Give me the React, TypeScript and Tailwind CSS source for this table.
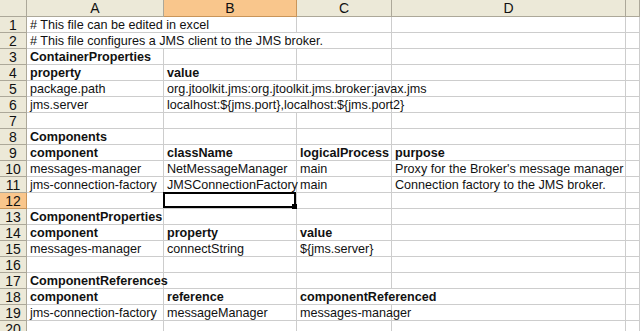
import React from "react";

type Cell = { t?: string; b?: boolean; span?: number };

// rows of the sheet, A..E; span lets long text run over the empty cells to the right
const rows: Cell[][] = [
  [{ t: "# This file can be edited in excel", span: 2 }, {}, {}, {}],
  [{ t: "# This file configures a JMS client to the JMS broker.", span: 3 }, {}, {}],
  [{ t: "ContainerProperties", b: true }, {}, {}, {}, {}],
  [{ t: "property", b: true }, { t: "value", b: true }, {}, {}, {}],
  [{ t: "package.path" }, { t: "org.jtoolkit.jms:org.jtoolkit.jms.broker:javax.jms", span: 2 }, {}, {}],
  [{ t: "jms.server" }, { t: "localhost:${jms.port},localhost:${jms.port2}", span: 2 }, {}, {}],
  [{}, {}, {}, {}, {}],
  [{ t: "Components", b: true }, {}, {}, {}, {}],
  [{ t: "component", b: true }, { t: "className", b: true }, { t: "logicalProcess", b: true }, { t: "purpose", b: true }, {}],
  [{ t: "messages-manager" }, { t: "NetMessageManager" }, { t: "main" }, { t: "Proxy for the Broker's message manager" }, {}],
  [{ t: "jms-connection-factory" }, { t: "JMSConnectionFactory" }, { t: "main" }, { t: "Connection factory to the JMS broker." }, {}],
  [{}, {}, {}, {}, {}],
  [{ t: "ComponentProperties", b: true }, {}, {}, {}, {}],
  [{ t: "component", b: true }, { t: "property", b: true }, { t: "value", b: true }, {}, {}],
  [{ t: "messages-manager" }, { t: "connectString" }, { t: "${jms.server}" }, {}, {}],
  [{}, {}, {}, {}, {}],
  [{ t: "ComponentReferences", b: true }, {}, {}, {}, {}],
  [{ t: "component", b: true }, { t: "reference", b: true }, { t: "componentReferenced", b: true, span: 2 }, {}],
  [{ t: "jms-connection-factory" }, { t: "messageManager" }, { t: "messages-manager" }, {}, {}],
  [{}, {}, {}, {}, {}],
];

const letters = ["A", "B", "C", "D", ""];

export default function App() {
  return (
    <div
      className="w-[640px] h-[331px] overflow-hidden bg-white text-[#111]"
      style={{ fontFamily: '"Liberation Sans", Arial, sans-serif' }}
    >
      <div className="grid grid-cols-[27px_137px_133px_95px_234px_1fr]">
        {/* column header row */}
        <div className="h-[17px] bg-[#ece9d8] border-r border-b border-[#aca899]" />
        {letters.map((l, i) => (
          <div
            key={i}
            className={
              "h-[17px] border-r border-b flex items-center justify-center text-[14px] leading-none " +
              (l === "B"
                ? "bg-[#f9c68c] border-[#c9955a]"
                : "bg-[#ece9d8] border-[#aca899]")
            }
          >
            {l}
          </div>
        ))}

        {rows.map((row, r) => {
          const sel = r === 11;
          return (
            <React.Fragment key={r}>
              <div
                className={
                  "h-4 border-r border-b flex items-center justify-center text-[14px] leading-none " +
                  (sel ? "bg-[#f9c68c] border-[#c9955a]" : "bg-[#ece9d8] border-[#aca899]")
                }
              >
                {r + 1}
              </div>
              {row.map((c, i) => (
                <div
                  key={i}
                  className={
                    "relative h-4 border-b border-r border-[#cdcdcd] pl-[3px] text-[12.6px] leading-[16px] whitespace-nowrap " +
                    (c.span === 2 ? "col-span-2 " : c.span === 3 ? "col-span-3 " : "") +
                    (c.b ? "font-bold" : "")
                  }
                >
                  {c.t}
                  {sel && i === 1 && (
                    <div className="absolute -left-[1px] -top-[1px] right-0 bottom-0 border-2 border-black">
                      <div className="absolute -right-[3px] -bottom-[3px] w-[5px] h-[5px] bg-black" />
                    </div>
                  )}
                </div>
              ))}
            </React.Fragment>
          );
        })}
      </div>
    </div>
  );
}
